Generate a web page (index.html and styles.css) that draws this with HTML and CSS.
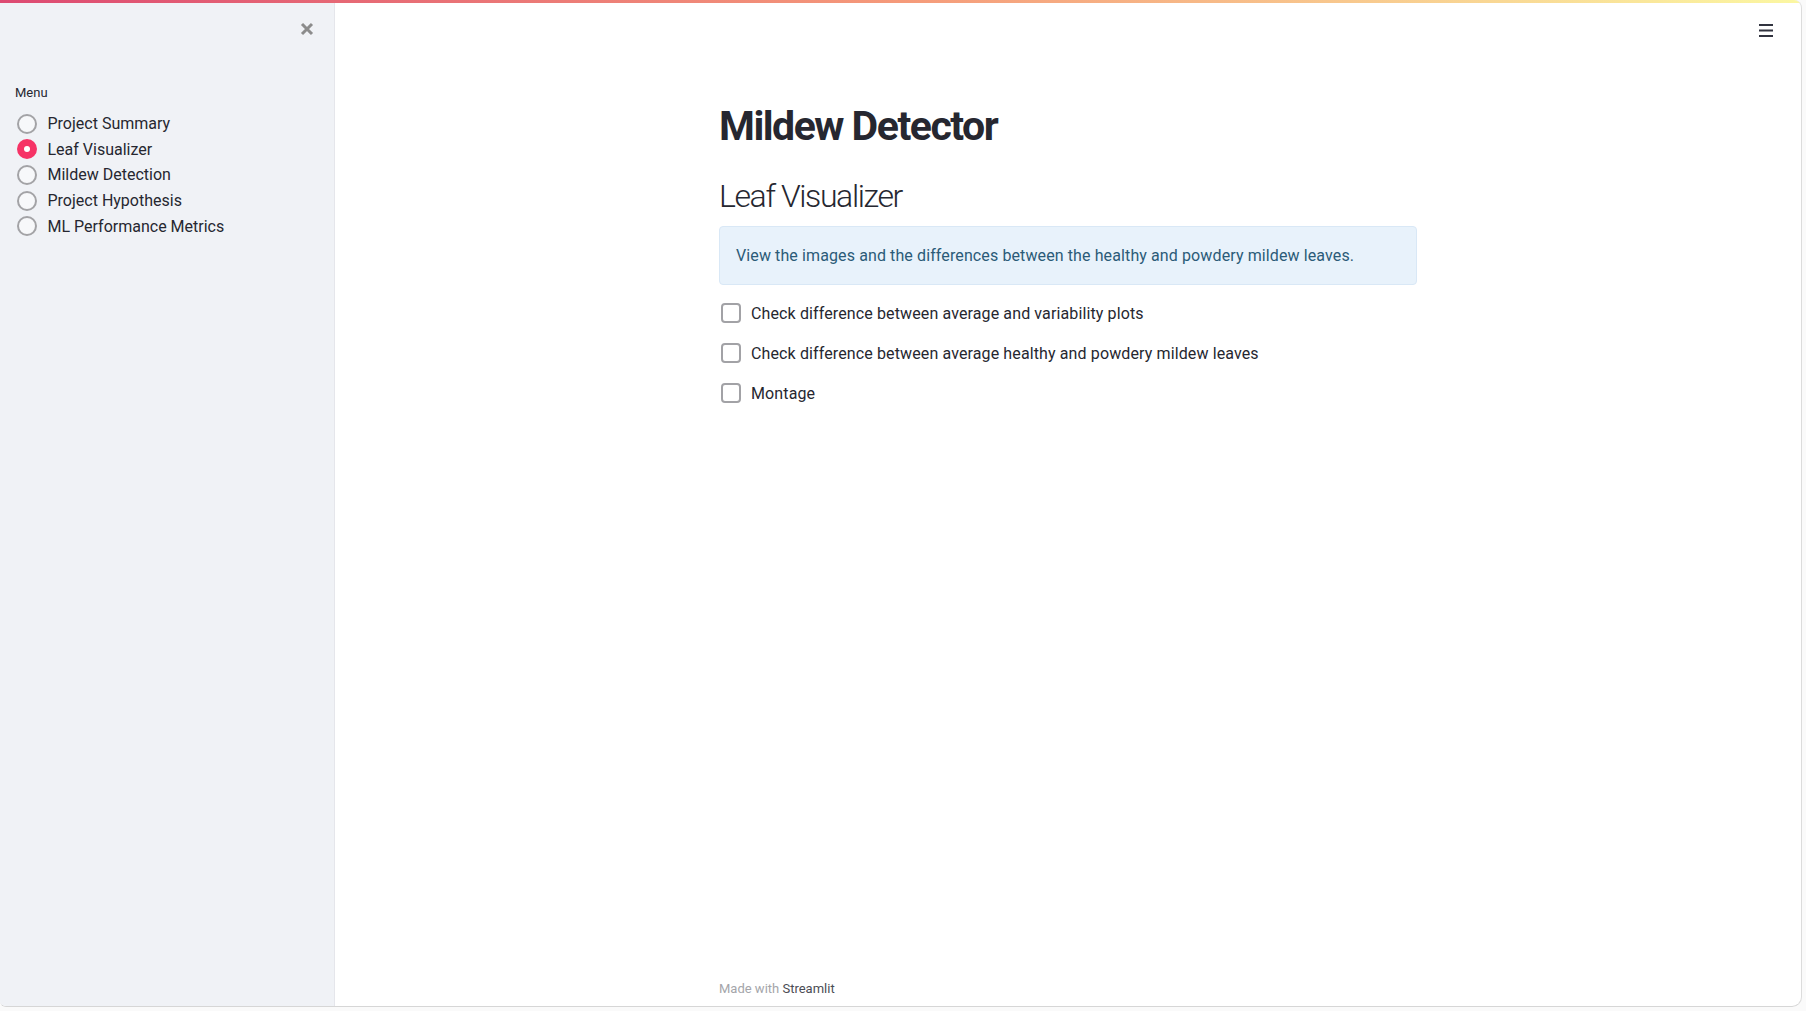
FILE: index.html
```html
<!DOCTYPE html>
<html lang="en">
<head>
<meta charset="utf-8">
<title>Mildew Detector</title>
<link rel="stylesheet" href="styles.css">
</head>
<body>
<div class="app">
  <div class="decoration"></div>
  <aside class="sidebar">
    <div class="sidebar-head">
      <button class="close-btn" aria-label="Close sidebar">
        <svg width="14" height="14" viewBox="0 0 14 14"><path d="M2 2 L12 12 M12 2 L2 12" stroke="#8c8c8c" stroke-width="3" stroke-linecap="butt" fill="none"/></svg>
      </button>
    </div>
    <div class="menu-label">Menu</div>
    <div class="radio-group">
      <label class="radio"><span class="radio-dot"></span><span>Project Summary</span></label>
      <label class="radio selected"><span class="radio-dot"></span><span>Leaf Visualizer</span></label>
      <label class="radio"><span class="radio-dot"></span><span>Mildew Detection</span></label>
      <label class="radio"><span class="radio-dot"></span><span>Project Hypothesis</span></label>
      <label class="radio"><span class="radio-dot"></span><span>ML Performance Metrics</span></label>
    </div>
  </aside>
  <main class="main">
    <header class="topbar">
      <button class="menu-btn" aria-label="Menu">
        <svg width="14" height="13" viewBox="0 0 14 13"><rect x="0" y="0" width="14" height="2" fill="#31333f"/><rect x="0" y="5.5" width="14" height="2" fill="#31333f"/><rect x="0" y="11" width="14" height="2" fill="#31333f"/></svg>
      </button>
    </header>
    <section class="block">
      <h1 class="title">Mildew Detector</h1>
      <h2 class="subtitle">Leaf Visualizer</h2>
      <div class="info">View the images and the differences between the healthy and powdery mildew leaves.</div>
      <div class="checks">
        <label class="check"><span class="box"></span><span>Check difference between average and variability plots</span></label>
        <label class="check"><span class="box"></span><span>Check difference between average healthy and powdery mildew leaves</span></label>
        <label class="check"><span class="box"></span><span>Montage</span></label>
      </div>
    </section>
    <footer class="footer">Made with <span class="brand">Streamlit</span></footer>
  </main>
</div>
</body>
</html>
```

FILE: styles.css
```css
* { box-sizing: border-box; }

html, body {
  margin: 0;
  padding: 0;
}

body {
  background: #fafafa;
  font-family: Roboto, "Liberation Sans", sans-serif;
  color: #262730;
  width: 1806px;
  height: 1011px;
  overflow: hidden;
}

.app {
  position: relative;
  display: flex;
  width: 1802px;
  height: 1007px;
  background: #ffffff;
  border-right: 1px solid #dcdcdc;
  border-bottom: 1px solid #d6d6d6;
  border-radius: 0 8px 10px 6px;
  overflow: hidden;
}

.decoration {
  position: absolute;
  top: 0;
  left: 0;
  right: 0;
  height: 3px;
  background: linear-gradient(90deg, #dd4a72, #f59a7a 50%, #fbf7a2);
  z-index: 2;
}

/* Sidebar */
.sidebar {
  width: 335px;
  flex: none;
  background: #f0f2f6;
  border-right: 1px solid #e5e6eb;
  padding: 0 16px 0 15px;
  display: flex;
  flex-direction: column;
}

.sidebar-head {
  height: 57px;
  display: flex;
  justify-content: flex-end;
  align-items: center;
  padding-top: 1px;
}

.close-btn, .menu-btn {
  border: none;
  background: none;
  padding: 0;
  margin: 0;
  display: flex;
  cursor: pointer;
}

.close-btn {
  margin-right: 4px;
}

.menu-label {
  font-size: 13px;
  line-height: 16px;
  margin-top: 28px;
  color: #262730;
}

.radio-group {
  margin-top: 10px;
  display: flex;
  flex-direction: column;
}

.radio {
  display: flex;
  align-items: center;
  height: 25.6px;
  font-size: 16px;
  color: #262730;
  gap: 10.5px;
}

.radio-dot {
  width: 20px;
  height: 20px;
  border-radius: 50%;
  border: 2px solid #a3a3a6;
  background: #f7f8fa;
  margin-left: 2px;
  flex: none;
  display: flex;
  align-items: center;
  justify-content: center;
}

.radio.selected .radio-dot {
  background: #f63366;
  border-color: #f63366;
}

.radio.selected .radio-dot::after {
  content: "";
  width: 6px;
  height: 6px;
  border-radius: 50%;
  background: #ffffff;
}

/* Main */
.main {
  flex: 1;
  display: flex;
  flex-direction: column;
  align-items: center;
  position: relative;
}

.topbar {
  align-self: stretch;
  height: 60px;
  display: flex;
  justify-content: flex-end;
  align-items: center;
  padding-right: 28px;
}

.block {
  width: 698px;
  padding-top: 40px;
}

.title {
  margin: 0;
  font-size: 41px;
  line-height: 52px;
  font-weight: 700;
  color: #262730;
  letter-spacing: -1.5px;
}

.subtitle {
  margin: 24px 0 0;
  font-size: 32px;
  line-height: 40px;
  font-weight: 300;
  color: #262730;
  letter-spacing: -1.4px;
}

.info {
  margin-top: 10px;
  background: #e8f2fb;
  border: 1px solid #d9e8f6;
  border-radius: 4px;
  padding: 17px 16px;
  font-size: 16px;
  line-height: 23px;
  color: #2b5b78;
  letter-spacing: 0.11px;
}

.checks {
  margin-top: 16px;
  display: flex;
  flex-direction: column;
  gap: 16px;
}

.check {
  display: flex;
  align-items: center;
  height: 24px;
  font-size: 16px;
  color: #262730;
  gap: 10px;
  letter-spacing: 0.12px;
}

.box {
  width: 20px;
  height: 20px;
  margin-left: 2px;
  border: 2px solid #a2a2a6;
  border-radius: 4px;
  background: #ffffff;
  flex: none;
}

.footer {
  margin-top: auto;
  width: 698px;
  font-size: 13px;
  line-height: 16px;
  padding-bottom: 9px;
  color: #a4a5aa;
}

.brand {
  color: #4b4c55;
}
```
